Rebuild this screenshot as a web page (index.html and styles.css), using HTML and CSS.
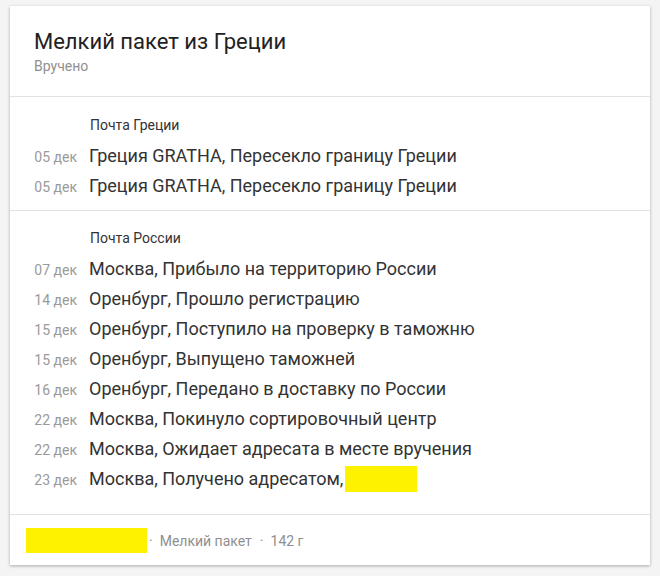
FILE: index.html
```html
<!DOCTYPE html>
<html lang="ru">
<head>
<meta charset="utf-8">
<link rel="stylesheet" href="styles.css">
</head>
<body>
<div class="card">
  <div class="header">
    <div class="title">Мелкий пакет из Греции</div>
    <div class="status">Вручено</div>
  </div>
  <div class="section">
    <div class="carrier">Почта Греции</div>
    <div class="row"><span class="date">05 дек</span><span class="event">Греция GRATHA, Пересекло границу Греции</span></div>
    <div class="row"><span class="date">05 дек</span><span class="event">Греция GRATHA, Пересекло границу Греции</span></div>
  </div>
  <div class="section section-last">
    <div class="carrier">Почта России</div>
    <div class="row"><span class="date">07 дек</span><span class="event">Москва, Прибыло на территорию России</span></div>
    <div class="row"><span class="date">14 дек</span><span class="event">Оренбург, Прошло регистрацию</span></div>
    <div class="row"><span class="date">15 дек</span><span class="event">Оренбург, Поступило на проверку в таможню</span></div>
    <div class="row"><span class="date">15 дек</span><span class="event">Оренбург, Выпущено таможней</span></div>
    <div class="row"><span class="date">16 дек</span><span class="event">Оренбург, Передано в доставку по России</span></div>
    <div class="row"><span class="date">22 дек</span><span class="event">Москва, Покинуло сортировочный центр</span></div>
    <div class="row"><span class="date">22 дек</span><span class="event">Москва, Ожидает адресата в месте вручения</span></div>
    <div class="row"><span class="date">23 дек</span><span class="event">Москва, Получено адресатом,<span class="mark mark-inline"></span></span></div>
  </div>
  <div class="footer">
    <span class="mark mark-track"></span>
    <span class="dot">·</span>
    <span class="meta">Мелкий пакет</span>
    <span class="dot">·</span>
    <span class="meta">142 г</span>
  </div>
</div>
</body>
</html>
```

FILE: styles.css
```css
html, body {
  margin: 0;
  padding: 0;
}
body {
  background: #f4f4f4;
  font-family: Roboto, "Liberation Sans", sans-serif;
  padding: 6px 10px;
}
.card {
  width: 640px;
  background: #fff;
  box-shadow: 0 1px 3px rgba(0,0,0,0.3);
}
.header {
  padding: 22px 24px 20px;
  border-bottom: 1px solid #e2e2e2;
}
.title {
  font-size: 22px;
  line-height: 28px;
  color: #212121;
}
.status {
  font-size: 14px;
  line-height: 20px;
  color: #8f8f8f;
}
.section {
  padding: 18px 24px 9px;
  border-bottom: 1px solid #e2e2e2;
}
.section-last {
  padding-top: 17px;
  padding-bottom: 20px;
}
.carrier {
  font-size: 14px;
  line-height: 20px;
  color: #333;
  margin-left: 56px;
  margin-bottom: 6px;
}
.row {
  display: flex;
  align-items: baseline;
  height: 30px;
  line-height: 30px;
}
.date {
  width: 43px;
  text-align: right;
  font-size: 14px;
  line-height: 20px;
  color: #9a9a9a;
  margin-right: 12px;
  flex: none;
}
.event {
  font-size: 18px;
  line-height: 30px;
  color: #333;
}
.mark {
  display: inline-block;
  background: #fff200;
}
.mark-inline {
  width: 72px;
  height: 26px;
  vertical-align: middle;
  margin-top: -2px;
  margin-left: 2px;
}
.footer {
  display: flex;
  align-items: center;
  padding: 13px 16px 12px;
  font-size: 14px;
  color: #8f8f8f;
}
.mark-track {
  width: 121px;
  height: 25px;
}
.dot {
  margin: 0 7px 0 2px;
}
.meta + .dot {
  margin-left: 8px;
}
```
